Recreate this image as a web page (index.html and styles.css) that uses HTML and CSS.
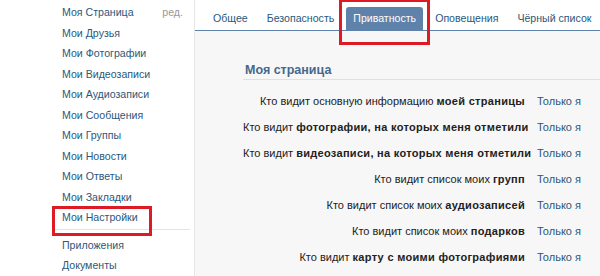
FILE: index.html
```html
<!DOCTYPE html>
<html lang="ru">

<head>
    <meta charset="utf-8">
    <title>Мои Настройки</title>
    <link rel="stylesheet" href="styles.css">
</head>

<body>

    <aside class="sidebar">
        <ul class="menu">
            <li><a href="#">Моя Страница</a><span class="edit">ред.</span></li>
            <li><a href="#">Мои Друзья</a></li>
            <li><a href="#">Мои Фотографии</a></li>
            <li><a href="#">Мои Видеозаписи</a></li>
            <li><a href="#">Мои Аудиозаписи</a></li>
            <li><a href="#">Мои Сообщения</a></li>
            <li><a href="#">Мои Группы</a></li>
            <li><a href="#">Мои Новости</a></li>
            <li><a href="#">Мои Ответы</a></li>
            <li><a href="#">Мои Закладки</a></li>
            <li class="marked"><a href="#">Мои Настройки</a></li>
        </ul>
        <div class="menu-sep"></div>
        <ul class="menu">
            <li><a href="#">Приложения</a></li>
            <li><a href="#">Документы</a></li>
        </ul>
    </aside>

    <main class="settings">
        <nav class="tabs">
            <a class="tab" href="#">Общее</a>
            <a class="tab" href="#">Безопасность</a>
            <a class="tab active" href="#">Приватность</a>
            <a class="tab" href="#">Оповещения</a>
            <a class="tab" href="#">Чёрный список</a>
        </nav>

        <section class="privacy">
            <h2>Моя страница</h2>
            <div class="rows">
                <div class="label">Кто видит основную информацию <b>моей страницы</b></div>
                <a class="value" href="#">Только я</a>

                <div class="label">Кто видит <b>фотографии, на которых меня отметили</b></div>
                <a class="value" href="#">Только я</a>

                <div class="label">Кто видит <b>видеозаписи, на которых меня отметили</b></div>
                <a class="value" href="#">Только я</a>

                <div class="label">Кто видит список моих <b>групп</b></div>
                <a class="value" href="#">Только я</a>

                <div class="label">Кто видит список моих <b>аудиозаписей</b></div>
                <a class="value" href="#">Только я</a>

                <div class="label">Кто видит список моих <b>подарков</b></div>
                <a class="value" href="#">Только я</a>

                <div class="label">Кто видит <b>карту с моими фотографиями</b></div>
                <a class="value" href="#">Только я</a>
            </div>
        </section>
    </main>

</body>
</html>
```

FILE: styles.css
```css
* {
    box-sizing: border-box;
}

body {
    margin: 0;
    display: flex;
    height: 276px;
    overflow: hidden;
    background-color: #fff;
    font-family: "Liberation Sans", Arial, sans-serif;
    font-size: 11px;
    color: #000;
}

a {
    color: #2b587a;
    text-decoration: none;
}

/* sidebar */

.sidebar {
    width: 195px;
    flex-shrink: 0;
    border-right: 1px solid #e6e6e6;
    padding-top: 2px;
    font-size: 10.6px;
}

.menu {
    list-style-type: none;
    margin: 0;
    padding: 0;
}

.menu li {
    position: relative;
    display: flex;
    height: 20.5px;
    align-items: center;
    padding-left: 62px;
}

.edit {
    margin-left: auto;
    margin-right: 11px;
    color: #999;
}

.menu-sep {
    height: 1px;
    margin: 1px 4px 5px 52px;
    background-color: #e4e4e4;
}

.marked::after {
    content: "";
    position: absolute;
    left: 52px;
    top: -1px;
    width: 94px;
    height: 24px;
    border: 3px solid #dc1b24;
}

/* content */

.settings {
    flex: 1;
    min-width: 0;
    background-color: #f7f7f7;
}

.tabs {
    display: flex;
    align-items: flex-end;
    height: 31px;
    padding-left: 11px;
    gap: 5px;
    background-color: #fff;
    border-bottom: 1px solid #5f82aa;
    font-size: 10.6px;
    white-space: nowrap;
}

.tab {
    position: relative;
    height: 23px;
    line-height: 23px;
    padding: 0 7px;
    border-radius: 3px 3px 0 0;
}

.tab.active {
    background-color: #5f82aa;
    color: #fff;
}

.tab.active::after {
    content: "";
    position: absolute;
    left: -7px;
    right: -7px;
    top: -8px;
    height: 40px;
    border: 3px solid #dc1b24;
}

.privacy {
    padding: 31px 0 0 48px;
}

h2 {
    margin: 0 0 8px 0;
    padding: 0 0 1px 2px;
    font-size: 12.5px;
    line-height: 16px;
    color: #45688e;
    border-bottom: 1px solid #dae1e8;
}

.rows {
    display: grid;
    grid-template-columns: 282px 1fr;
    column-gap: 12px;
    grid-auto-rows: 26px;
    align-items: center;
    margin-left: -48px;
    padding-left: 48px;
}

.label {
    text-align: right;
    white-space: nowrap;
    color: #222;
}

.label b {
    letter-spacing: 0.3px;
}

.value {
    color: #2b587a;
}
```
